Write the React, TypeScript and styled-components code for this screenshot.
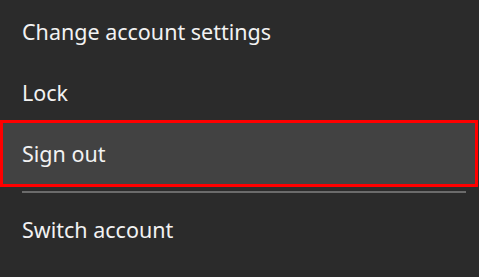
import React from "react";
import styled, { createGlobalStyle } from "styled-components";

const Global = createGlobalStyle`
  html, body { margin: 0; padding: 0; background: #2b2b2b; }
  body { width: 479px; height: 277px; overflow: hidden; }
`;

const Menu = styled.div`
  display: flex;
  flex-direction: column;
  width: 479px;
  height: 277px;
  background: #2b2b2b;
  font-family: "Noto Sans", "Open Sans", sans-serif;
  color: #f2f2f2;
`;

const Item = styled.div<{ $h: number; $offset?: number; $selected?: boolean }>`
  box-sizing: border-box;
  display: flex;
  align-items: center;
  height: ${(p) => p.$h}px;
  padding-left: ${(p) => (p.$selected ? 19 : 22)}px;
  padding-top: ${(p) => p.$offset ?? 0}px;
  font-size: 21.5px;
  line-height: 1;
  background: ${(p) => (p.$selected ? "#424242" : "transparent")};
  border: ${(p) => (p.$selected ? "3px solid #ff0000" : "none")};
  margin-right: ${(p) => (p.$selected ? 1 : 0)}px;
`;

const Divider = styled.div`
  height: 2px;
  margin: 4px 13px 0 22px;
  background: #6b6b6b;
`;

export default function App() {
  return (
    <>
      <Global />
      <Menu>
        <Item $h={63}>Change account settings</Item>
        <Item $h={57} $offset={3}>Lock</Item>
        <Item $h={67} $selected>Sign out</Item>
        <Divider />
        <Item $h={74}>Switch account</Item>
      </Menu>
    </>
  );
}
